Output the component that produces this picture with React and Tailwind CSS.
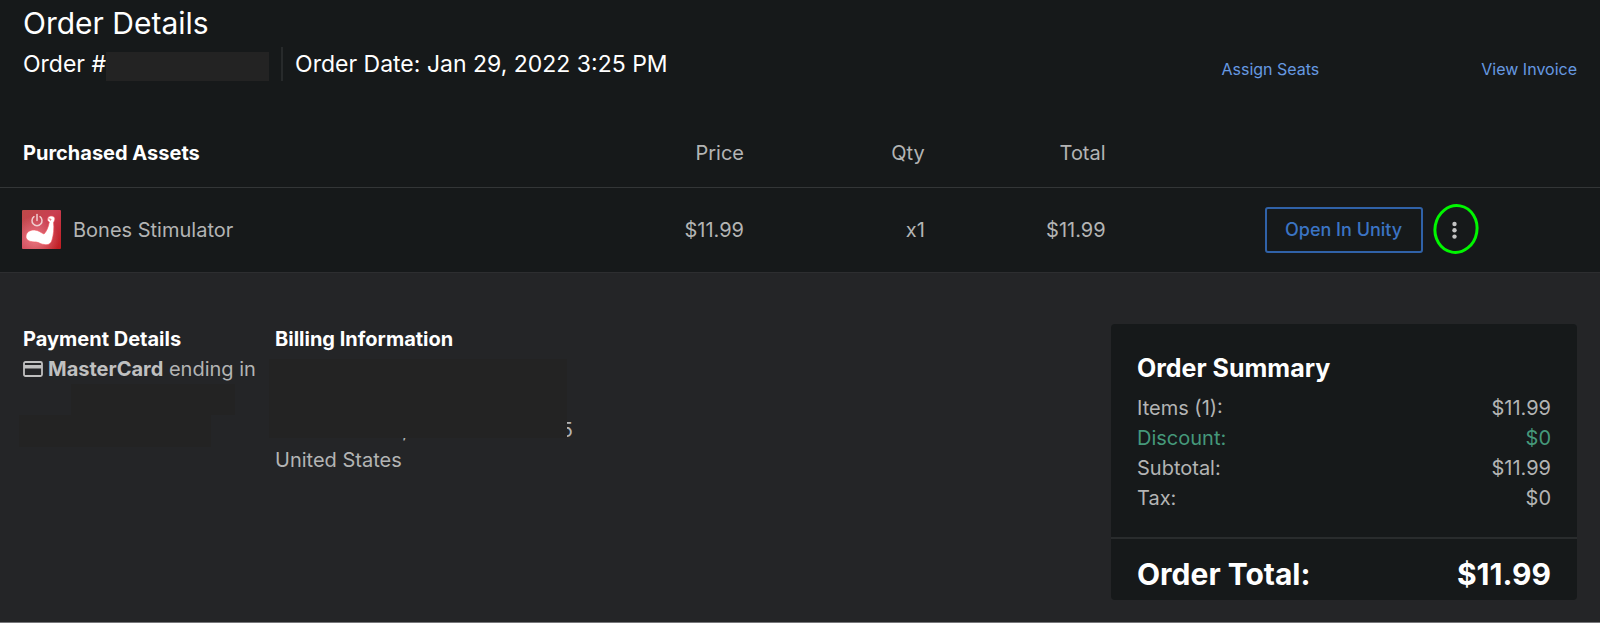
import React from 'react';

const order = {
  date: 'Jan 29, 2022 3:25 PM',
  items: [{ id: 1, name: 'Bones Stimulator', price: '$11.99', qty: 'x1', total: '$11.99' }],
  total: '$11.99',
};

const summaryRows = [
  { label: 'Items (1):', value: '$11.99' },
  { label: 'Discount:', value: '$0', highlight: true },
  { label: 'Subtotal:', value: '$11.99' },
  { label: 'Tax:', value: '$0' },
];

const AssetThumb = () => (
  <svg className="h-[39px] w-[39px] shrink-0" viewBox="0 0 39 39" aria-hidden="true">
    <defs>
      <linearGradient id="thumbBg" x1="0" y1="0" x2="1" y2="1">
        <stop offset="0" stopColor="#bd4a48" />
        <stop offset="0.45" stopColor="#c93f52" />
        <stop offset="1" stopColor="#c01c20" />
      </linearGradient>
      <radialGradient id="thumbGlow" cx="0.35" cy="0.75" r="0.6">
        <stop offset="0" stopColor="#f08a92" stopOpacity="0.8" />
        <stop offset="1" stopColor="#f08a92" stopOpacity="0" />
      </radialGradient>
    </defs>
    <rect width="39" height="39" rx="1" fill="url(#thumbBg)" />
    <rect width="39" height="39" rx="1" fill="url(#thumbGlow)" />
    <path
      d="M4 26C4.500 22 8 19.800 12.500 20C16.500 20.200 18.500 22.500 22 24C24.500 21.500 26.500 17 27.300 12C25.500 11.500 25 9.500 26 7.500C27.500 5.500 30.500 5.500 32.200 7C33.500 8.500 32.500 11 31.500 12.500C32.300 18 31.500 25 30 30C29 34 26 35.200 22.500 34.500C19 34.500 17.500 32.500 14 32C9 32 3.500 31 4 26Z"
      fill="#fff"
      stroke="#f4505a"
      strokeWidth="0.6"
    />
    <path d="M26.500 8.800L29 9.300L28.500 10.500" fill="none" stroke="#d9434f" strokeWidth="0.800" />
    <g fill="none" stroke="#f0cfd0" strokeWidth="1.500" strokeLinecap="round">
      <path d="M12 6.700A5 5 0 1 0 18 6.700" />
      <path d="M15 4.500V10.500" />
    </g>
  </svg>
);

const CardIcon = () => (
  <svg className="h-4 w-5 shrink-0" viewBox="0 0 20 16" aria-hidden="true">
    <rect x="1" y="1" width="18" height="14" rx="1.500" fill="none" stroke="#c0c0c0" strokeWidth="1.800" />
    <rect x="1" y="4" width="18" height="3.500" fill="#c0c0c0" />
  </svg>
);

const OrderHeader = () => (
  <div className="flex items-end justify-between px-[23px] pt-[5px]">
    <div className="text-white">
      <h1 className="text-[30px] leading-9">Order Details</h1>
      <div className="mt-1.5 flex text-[23px] leading-[34px]">
        <span>Order #</span>
        <span className="mt-[5px] h-[29px] w-[163px] bg-[#232323]" />
        <span className="ml-3 w-0.5 bg-[#272a2b]" />
        <span className="ml-3">Order Date: {order.date}</span>
      </div>
    </div>
    <nav className="flex gap-[162px] text-base leading-6 text-[#6699e2]">
      <a href="#seats">Assign Seats</a>
      <a href="#invoice">View Invoice</a>
    </nav>
  </div>
);

const AssetTable = () => (
  <table className="mt-[39px] w-full table-fixed">
    <thead>
      <tr className="h-[67px] border-b border-[#333637]">
        <th className="w-[46.5%] p-0">
          <div className="flex justify-between pl-[23px]">
            <span className="font-bold text-white">Purchased Assets</span>
            <span className="font-normal">Price</span>
          </div>
        </th>
        <th className="w-[11.3%] p-0 text-right font-normal">Qty</th>
        <th className="w-[11.3%] p-0 text-right font-normal">Total</th>
        <th className="p-0" aria-label="Actions" />
      </tr>
    </thead>
    <tbody>
      {order.items.map((item) => (
        <tr key={item.id} className="h-[85px] border-b border-[#2d2e30]">
          <td className="p-0">
            <div className="flex items-center pl-[22px]">
              <AssetThumb />
              <span className="ml-3">{item.name}</span>
              <span className="ml-auto">{item.price}</span>
            </div>
          </td>
          <td className="p-0 text-right">{item.qty}</td>
          <td className="p-0 text-right">{item.total}</td>
          <td className="p-0">
            <div className="ml-[159px] flex items-center">
              <button type="button" className="h-[46px] w-[158px] rounded-[3px] border-2 border-[#3062a8] text-lg font-medium text-[#3b74c4]">
                Open In Unity
              </button>
              <button type="button" aria-label="More actions" className="ml-2.5 h-[50px] w-[46px]">
                <svg className="h-full w-full overflow-visible" viewBox="0 0 46 50" aria-hidden="true">
                  <ellipse cx="23" cy="24" rx="21" ry="23.500" transform="rotate(10 23 24)" fill="none" stroke="#00f600" strokeWidth="3" />
                  <circle cx="21.500" cy="19" r="2.200" fill="#c4c4c4" />
                  <circle cx="21.500" cy="25.300" r="2.200" fill="#c4c4c4" />
                  <circle cx="21.500" cy="31.600" r="2.200" fill="#c4c4c4" />
                </svg>
              </button>
            </div>
          </td>
        </tr>
      ))}
    </tbody>
  </table>
);

const PaymentDetails = () => (
  <section className="w-[252px]">
    <h2 className="font-bold text-white">Payment Details</h2>
    <p className="flex items-center whitespace-nowrap">
      <CardIcon />
      <span className="ml-[5px]"><b className="text-[#c0c0c0]">MasterCard</b> ending in</span>
    </p>
    <div className="ml-12 h-[31px] w-[164px] bg-[#232323]" />
    <div className="-ml-1 h-8 w-[192px] bg-[#232323]" />
  </section>
);

const BillingInformation = () => (
  <section>
    <h2 className="font-bold text-white">Billing Information</h2>
    <div className="relative h-[91px] w-[298px] pt-[61px]">
      <div className="flex justify-between pl-[127px]">
        <span>,</span>
        <span>5</span>
      </div>
      <div className="absolute -left-1.5 top-[5px] h-[79px] w-[298px] bg-[#232323]" />
    </div>
    <p>United States</p>
  </section>
);

const OrderSummary = () => (
  <section className="ml-auto w-[466px] rounded bg-[#16191a]">
    <div className="border-b-2 border-[#292c2d] px-[26px] pb-6 pt-7">
      <h2 className="text-[25px] font-bold leading-8 text-white">Order Summary</h2>
      <dl className="mt-[9px]">
        {summaryRows.map((row) => (
          <div key={row.label} className={`flex justify-between ${row.highlight ? 'text-[#45987a]' : ''}`}>
            <dt>{row.label}</dt>
            <dd>{row.value}</dd>
          </div>
        ))}
      </dl>
    </div>
    <div className="flex justify-between px-[26px] pb-2 pt-[17px] text-[30px] font-bold leading-9 text-white">
      <span>Order Total:</span>
      <span>{order.total}</span>
    </div>
  </section>
);

const App = () => (
  <main className="min-h-screen border-b border-[#77777a] bg-[#242527] font-['Inter',sans-serif] text-xl leading-[30px] text-[#b3b4b4]">
    <div className="bg-[#16191a]">
      <OrderHeader />
      <AssetTable />
    </div>
    <div className="flex items-start px-[23px] pt-[51px]">
      <div className="flex">
        <PaymentDetails />
        <BillingInformation />
      </div>
      <OrderSummary />
    </div>
  </main>
);

export default App;
